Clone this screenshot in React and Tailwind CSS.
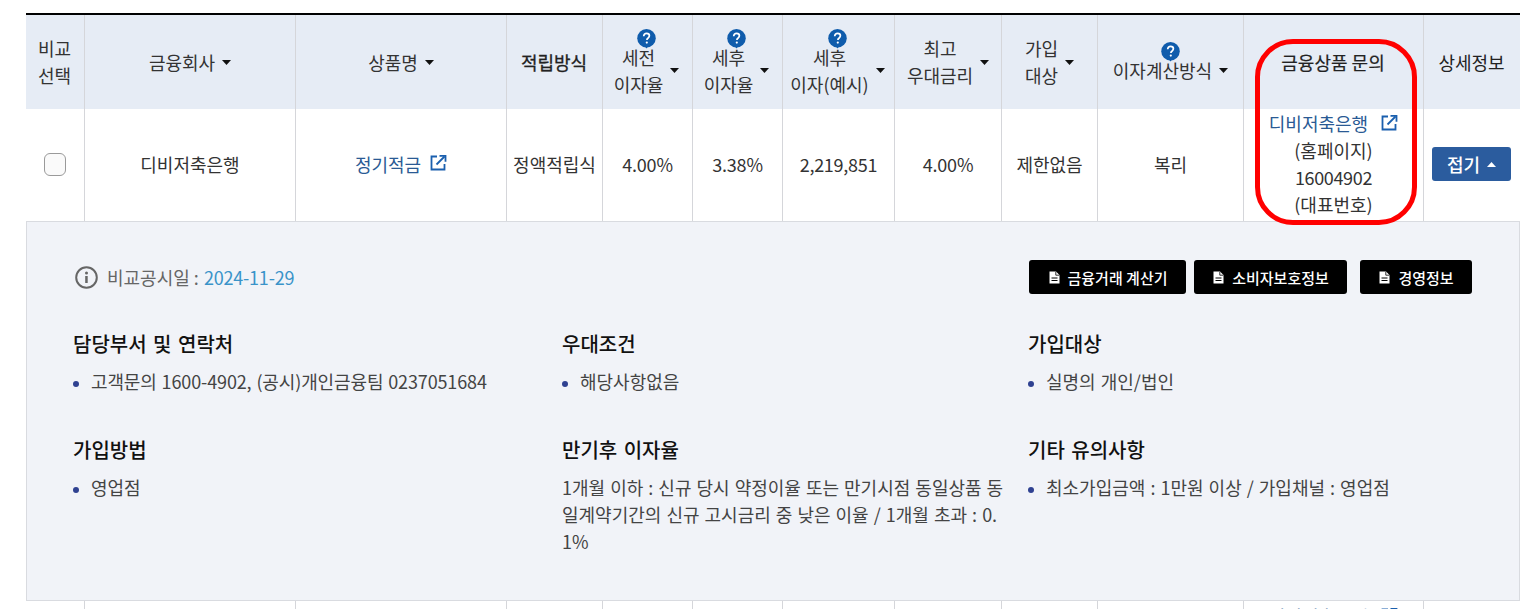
import React from 'react';

const GRID = 'grid grid-cols-[59px_211px_211px_96px_90px_90px_112px_107px_96px_146px_180px_96px]';

const Caret = ({ up }) => (
  <svg width="9" height="5" viewBox="0 0 9 5" className="shrink-0">
    <path d={up ? 'M4.5 0 9 5H0Z' : 'M0 0H9L4.5 5Z'} fill={up ? '#fff' : '#111'} />
  </svg>
);

const HelpIcon = () => (
  <svg width="19" height="20" viewBox="0 0 19 20" className="mb-[-5px] block">
    <circle cx="9.5" cy="9.25" r="9.25" fill="#0f5cac" />
    <path d="M8 17.5h3L9.5 19.6Z" fill="#0f5cac" />
    <path d="M6.7 7.2c0-1.7 1.2-2.8 2.9-2.8s2.8 1 2.8 2.4c0 1.2-.7 1.8-1.5 2.4-.7.5-1 .9-1 1.7" fill="none" stroke="#fff" strokeWidth="1.7" />
    <circle cx="9.8" cy="13.6" r="1.1" fill="#fff" />
  </svg>
);

const ExternalIcon = () => (
  <svg width="18" height="18" viewBox="0 0 18 18" fill="none" stroke="#1a5fae" strokeWidth="1.8" className="mb-[2px] shrink-0">
    <path d="M8 2.5H2.5v13h13V10" />
    <path d="M7.5 10.5 15.5 2.5" />
    <path d="M10.5 1.8h6v6" />
  </svg>
);

const DocIcon = () => (
  <svg width="11" height="13" viewBox="0 0 11 13" className="ml-[1px] shrink-0">
    <path d="M0.5 0.5H7L10.5 4V12.5H0.5Z" fill="#fff" />
    <path d="M6.8 0.8V4.2H10.2" fill="none" stroke="#000" strokeWidth="0.8" />
    <path d="M2.5 7H8.5M2.5 9.5H8.5" stroke="#000" strokeWidth="1.2" />
  </svg>
);

const InfoIcon = () => (
  <svg width="23" height="23" viewBox="0 0 23 23" className="shrink-0">
    <circle cx="11.5" cy="11.5" r="10.3" fill="none" stroke="#666" strokeWidth="2" />
    <circle cx="11.5" cy="7" r="1.5" fill="#666" />
    <path d="M10.2 10h2.5v7h-2.5z" fill="#666" />
  </svg>
);

const Th = ({ children, help, sort, className = '', last }) => (
  <div className={`flex flex-col items-center justify-center ${help ? 'pt-[2px]' : ''} ${sort ? '' : 'pr-[1px]'} ${last ? '' : 'border-r border-[#d5d6da]'} ${className}`}>
    {help && <HelpIcon />}
    <div className="flex items-center gap-[7px]">
      <div className="text-center">{children}</div>
      {sort && <Caret />}
    </div>
  </div>
);

const Td = ({ children, last, className = '' }) => (
  <div className={`flex items-center justify-center pb-[2px] text-center ${last ? '' : 'border-r border-[#d5d6da]'} ${className}`}>{children}</div>
);

const Section = ({ title, children }) => (
  <div>
    <h3 className="text-[20px] leading-[30px] font-medium text-[#111] [word-spacing:2px]">{title}</h3>
    <div className="mt-[9px] text-[18px] leading-[27px] text-[#444] [word-spacing:1px]">{children}</div>
  </div>
);

const Bullet = ({ children }) => (
  <div className="flex items-start">
    <span className="mt-[13px] mr-[12px] h-[6px] w-[6px] shrink-0 rounded-full bg-[#2f4191]" />
    <span>{children}</span>
  </div>
);

const PanelButton = ({ children, className = '' }) => (
  <button className={`flex h-[34px] items-center justify-center gap-[8px] rounded-[3px] bg-black text-[15px] font-medium text-white ${className}`}>
    <DocIcon />
    {children}
  </button>
);

export default function App() {
  return (
    <div
      className="h-[609px] w-[1540px] overflow-hidden bg-white pt-[13px] pl-[26px] text-[18px] leading-[27px] text-[#333]"
      style={{ fontFamily: '"Noto Sans CJK KR", "Noto Sans", sans-serif' }}
    >
      <div className="relative w-[1494px]">
        <div className={`${GRID} h-[96px] border-t-2 border-black bg-[#e6ecf5] text-[#333]`}>
          <Th>비교<br />선택</Th>
          <Th sort>금융회사</Th>
          <Th sort>상품명</Th>
          <Th className="text-[#222] [-webkit-text-stroke:0.3px_#222]">적립방식</Th>
          <Th help sort className="pr-[2px]">세전<br />이자율</Th>
          <Th help sort className="pr-[2px]">세후<br />이자율</Th>
          <Th help sort className="pr-[2px]">세후<br />이자(예시)</Th>
          <Th sort>최고<br />우대금리</Th>
          <Th sort>가입<br />대상</Th>
          <Th help sort>이자계산방식</Th>
          <Th className="text-[#222] [-webkit-text-stroke:0.2px_#222]">금융상품 문의</Th>
          <Th last className="text-[#222]">상세정보</Th>
        </div>

        <div className={`${GRID} h-[112px]`}>
          <Td>
            <input type="checkbox" className="h-[23px] w-[22px] appearance-none rounded-[6px] border border-[#9a9a9a] bg-[#fafafa]" />
          </Td>
          <Td>디비저축은행</Td>
          <Td>
            <span className="flex items-center gap-[8px] text-[#2a5a94]">정기적금 <ExternalIcon /></span>
          </Td>
          <Td>정액적립식</Td>
          <Td className="tracking-[-0.2px]">4.00%</Td>
          <Td className="tracking-[-0.2px]">3.38%</Td>
          <Td className="tracking-[-0.25px]">2,219,851</Td>
          <Td className="tracking-[-0.2px]">4.00%</Td>
          <Td>제한없음</Td>
          <Td>복리</Td>
          <Td>
            <div>
              <div className="flex items-center justify-center gap-[12px] text-[#2a5a94]">디비저축은행 <ExternalIcon /></div>
              <div>(홈페이지)</div>
              <div className="tracking-[-0.35px]">16004902</div>
              <div>(대표번호)</div>
            </div>
          </Td>
          <Td last>
            <button className="ml-[-1px] flex h-[34px] w-[79px] items-center justify-center gap-[7px] rounded-[3px] bg-[#2b5c9e] font-medium text-white">
              접기 <Caret up />
            </button>
          </Td>
        </div>

        <div className="h-[380px] border border-[#d9dbe0] bg-[#f1f3f8] pt-[38px] pr-[47px] pl-[46px]">
          <div className="flex items-center justify-between">
            <div className="ml-[2px] flex items-center gap-[9px] text-[#666]">
              <InfoIcon />
              <span>비교공시일 : <span className="ml-[1px] tracking-[-0.2px] text-[#3a93c9]">2024-11-29</span></span>
            </div>
            <div className="flex">
              <PanelButton className="w-[157px]">금융거래 계산기</PanelButton>
              <PanelButton className="ml-[8px] w-[153px]">소비자보호정보</PanelButton>
              <PanelButton className="ml-[13px] w-[112px]">경영정보</PanelButton>
            </div>
          </div>

          <div className="mt-[35px] grid grid-cols-[489px_466px_1fr] gap-y-[40px]">
            <Section title="담당부서 및 연락처"><Bullet><span className="tracking-[-0.13px]">고객문의 1600-4902, (공시)개인금융팀 0237051684</span></Bullet></Section>
            <Section title="우대조건"><Bullet>해당사항없음</Bullet></Section>
            <Section title="가입대상"><Bullet>실명의 개인/법인</Bullet></Section>
            <Section title="가입방법"><Bullet>영업점</Bullet></Section>
            <Section title="만기후 이자율">
              <p className="w-[446px] break-all">1개월 이하 : 신규 당시 약정이율 또는 만기시점 동일상품 동일계약기간의 신규 고시금리 중 낮은 이율 / 1개월 초과 : 0.1%</p>
            </Section>
            <Section title="기타 유의사항"><Bullet>최소가입금액 : 1만원 이상 / 가입채널 : 영업점</Bullet></Section>
          </div>
        </div>

        <div className={`${GRID} h-[112px]`}>
          {Array.from({ length: 10 }).map((_, i) => <Td key={i} />)}
          <Td>
            <div className="mb-auto pt-[2px]">
              <div className="flex items-center justify-center gap-[12px] text-[#2a5a94]">디비저축은행 <ExternalIcon /></div>
            </div>
          </Td>
          <Td last />
        </div>

        {/* red highlight drawn over the inquiry column */}
        <div className="absolute top-[26px] left-[1229px] h-[186px] w-[162px] rounded-[38px] border-[5px] border-[#ff0000]" />
      </div>
    </div>
  );
}
